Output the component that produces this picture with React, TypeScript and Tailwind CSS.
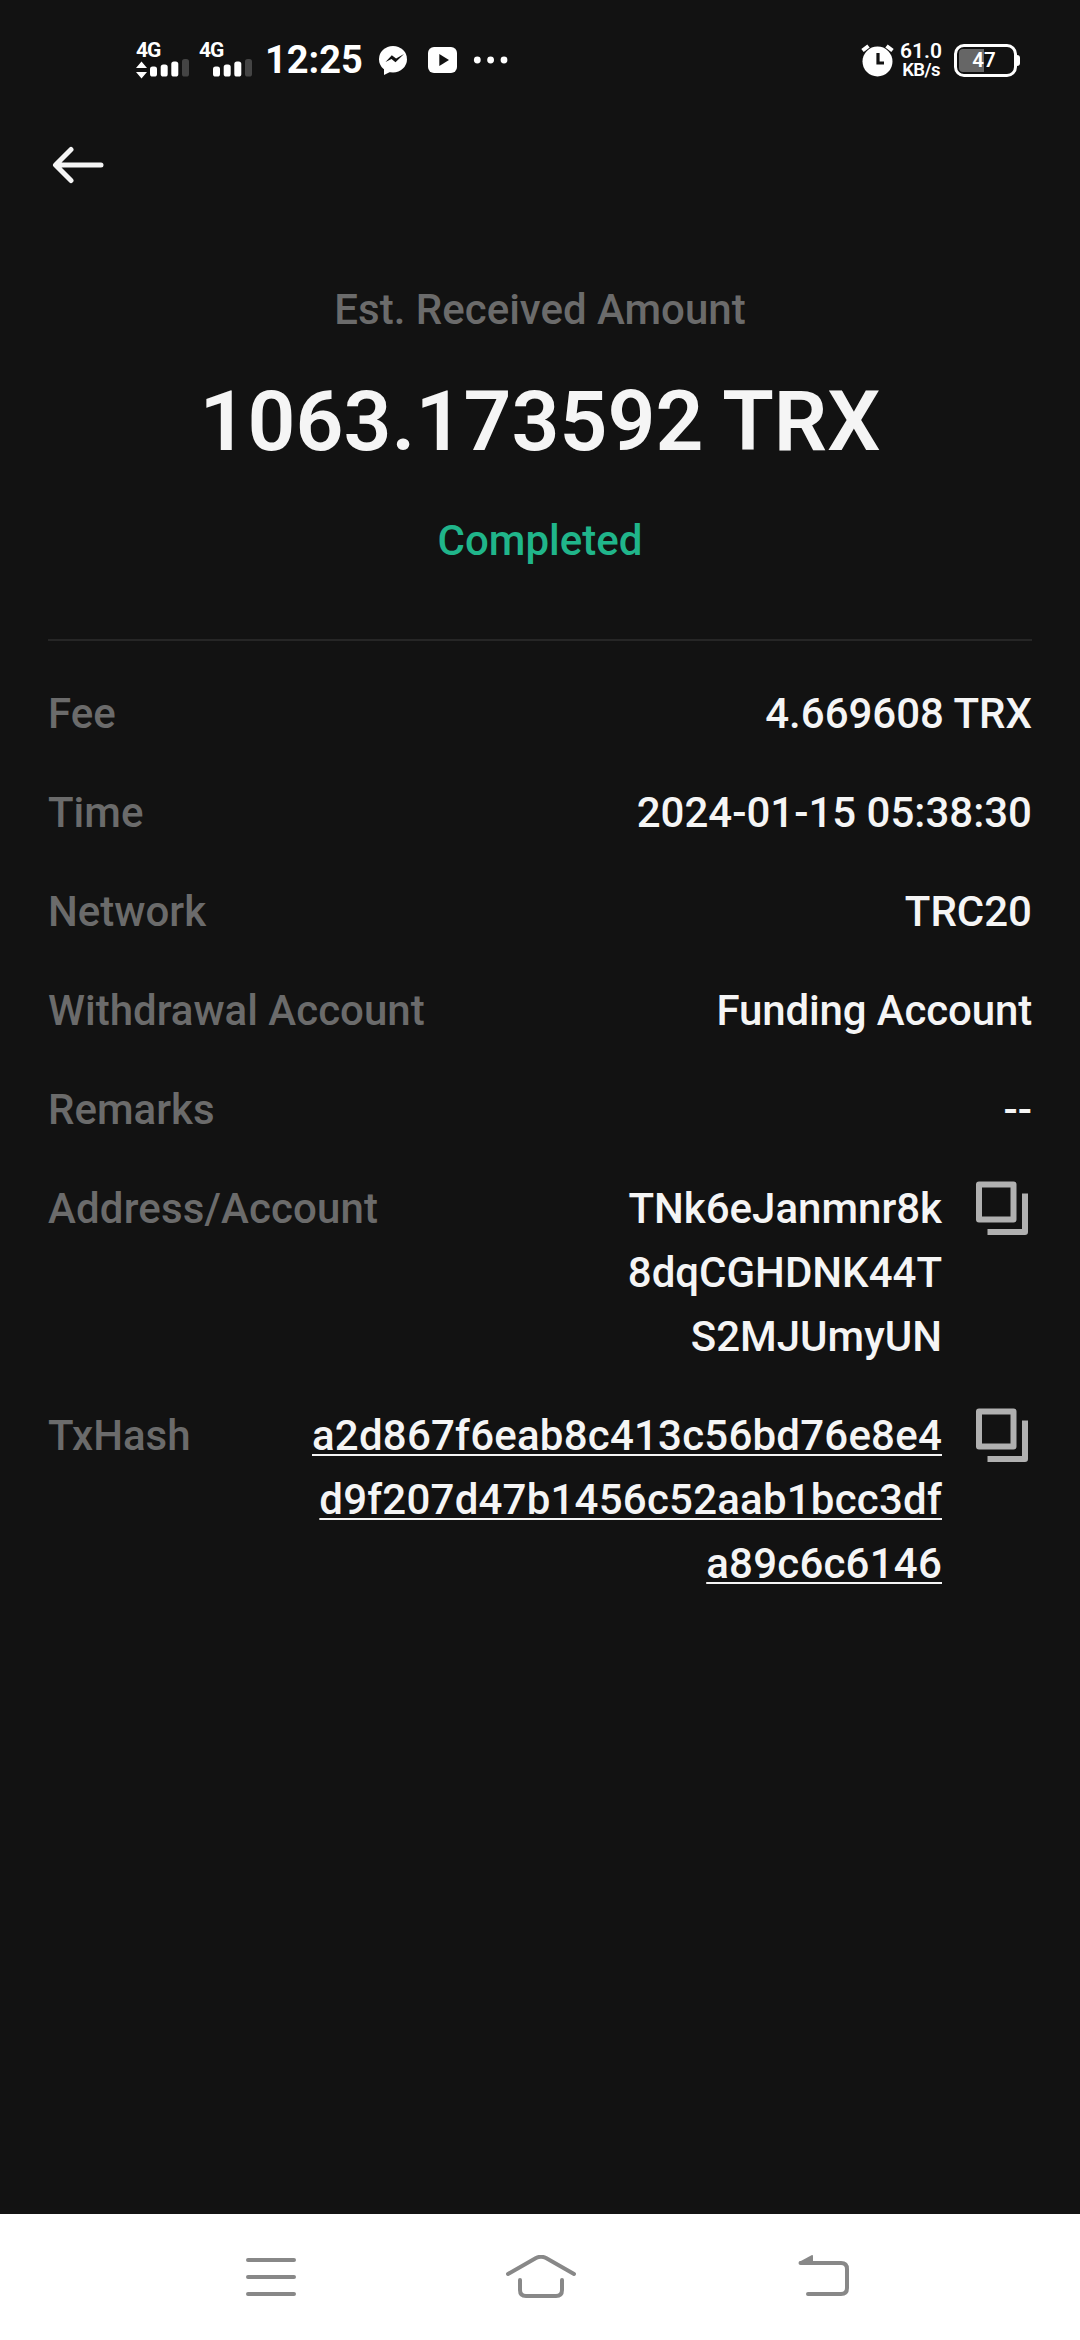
import React from "react";

type Detail = { label: string; value: string; valueClass?: string };

const details: Detail[] = [
  { label: "Fee", value: "4.669608 TRX" },
  { label: "Time", value: "2024-01-15 05:38:30" },
  { label: "Network", value: "TRC20" },
  { label: "Withdrawal Account", value: "Funding Account", valueClass: "tracking-[-0.15px]" },
  { label: "Remarks", value: "--" },
];

const addressLines = ["TNk6eJanmnr8k", "8dqCGHDNK44T", "S2MJUmyUN"];
const hashLines = [
  "a2d867f6eab8c413c56bd76e8e4",
  "d9f207d47b1456c52aab1bcc3df",
  "a89c6c6146",
];

function Signal({ arrows }: { arrows?: boolean }) {
  return (
    <div className="flex w-[54px] flex-col">
      <span className="h-[17px] text-[21px] leading-[17px] font-bold tracking-[-1px]">4G</span>
      <svg className="block h-[20px] w-[54px]" viewBox="0 0 54 20" fill="#fff">
        {arrows && <path d="M5.5 2.5 11 9H0zM5.5 19.5 0 13h11z" />}
        <rect x="14" y="7.5" width="7" height="10" rx="2.6" />
        <rect x="24.7" y="5.5" width="7" height="12" rx="2.6" />
        <rect x="35.3" y="2.5" width="7" height="15" rx="2.6" />
        <rect x="46" y="0" width="7" height="17.5" rx="2.6" fill="#444" />
      </svg>
    </div>
  );
}

function StatusBar() {
  return (
    <header className="flex h-[120px] items-center justify-between pr-[60px] pl-[136px] text-white">
      <div className="flex h-[40px] items-center">
        <Signal arrows />
        <div className="ml-[9px]">
          <Signal />
        </div>
        <span className="ml-[12px] w-[99px] text-[38px] leading-[40px] font-bold">12:25</span>
        <svg className="ml-[15px] block h-[29px] w-[28px]" viewBox="0 0 28 29" fill="#fff">
          <ellipse cx="14" cy="13.2" rx="14" ry="13.2" />
          <path d="M5 20v9l8-4z" />
          <path d="m6.5 16 6.3-6.8 4.3 3.3L25 8l-8.500 8.300-4-3.300z" fill="#121212" />
        </svg>
        <svg className="ml-[21px] block h-[26px] w-[29px]" viewBox="0 0 29 26">
          <rect width="29" height="26" rx="6" fill="#fff" />
          <path d="M11.300 7v12l9.700-6z" fill="#121212" />
        </svg>
        <svg className="ml-[16px] block h-[8px] w-[36px]" viewBox="0 0 36 8" fill="#fff">
          <circle cx="4.3" cy="4" r="3.4" />
          <circle cx="17.6" cy="4" r="3.4" />
          <circle cx="31" cy="4" r="3.4" />
        </svg>
      </div>
      <div className="flex items-center">
        <svg className="block h-[33px] w-[33px]" viewBox="0 0 33 33">
          <circle cx="16.5" cy="17.5" r="15" fill="#fff" />
          <path d="M1.5 6.5 7.5 2M25.5 2l6 4.5" stroke="#fff" strokeWidth="4" />
          <path d="M17 9v10h6" fill="none" stroke="#121212" strokeWidth="3.2" />
        </svg>
        <div className="ml-[6px] flex w-[42px] flex-col items-center">
          <span className="text-[21px] leading-[18px] font-semibold">61.0</span>
          <span className="mt-px text-[18.500px] leading-[18px] font-semibold tracking-[-0.6px]">KB/s</span>
        </div>
        <div className="ml-[12px] flex h-[33px] w-[63px] items-center rounded-[10px] border-[3px] border-white p-[2px]">
          <div className="flex h-full w-full items-center justify-center rounded-[4px] bg-[linear-gradient(90deg,#666_0_25px,transparent_25px)] bg-no-repeat pr-[3px]">
            <span className="text-[20.500px] leading-[23px] font-semibold">47</span>
          </div>
        </div>
        <div className="h-[11px] w-[3px] rounded-r-sm bg-white" />
      </div>
    </header>
  );
}

function CopyIcon() {
  return (
    <svg className="mt-[4px] mr-[3px] ml-[33px] block h-[55px] w-[54px] shrink-0" viewBox="0 0 54 55" fill="none" stroke="#b0b0b0" strokeWidth="6" strokeLinejoin="round">
      <rect x="4" y="3.5" width="34.5" height="35" />
      <path d="M12.5 51H50V12.5" />
    </svg>
  );
}

function LongRow({ label, lines, underline }: { label: string; lines: string[]; underline?: boolean }) {
  return (
    <div className="flex">
      <span className={underline ? "grow text-[#6b6b6b]" : "grow tracking-[0.15px] text-[#6b6b6b]"}>{label}</span>
      <div className="flex flex-col items-end">
        {lines.map((line) => (
          <span
            key={line}
            className={underline ? "tracking-[0.22px] underline decoration-[2px] underline-offset-[4px]" : ""}
          >
            {line}
          </span>
        ))}
      </div>
      <CopyIcon />
    </div>
  );
}

export default function App() {
  return (
    <div className="flex h-[2340px] w-[1080px] flex-col overflow-hidden bg-[#121212] font-['Roboto',sans-serif] text-[42px] leading-[64px] font-medium text-[#f5f5f5]">
      <StatusBar />
      <div className="flex h-[90px] items-center pl-[52px]">
        <svg className="block h-[38px] w-[52px]" viewBox="0 0 52 38" fill="none" stroke="#f5f5f5" strokeWidth="5" strokeLinecap="round" strokeLinejoin="round">
          <path d="M49 19H4M19 3.5 3.5 19 19 34.5" />
        </svg>
      </div>
      <main className="flex grow flex-col px-[48px]">
        <section className="flex h-[429px] flex-col items-center pt-[68px]">
          <span className="text-[#6b6b6b]">Est. Received Amount</span>
          <h1 className="mt-[30px] text-[84px] leading-[100px] font-semibold">1063.173592 TRX</h1>
          <span className="mt-[37px] text-[#20b58a]">Completed</span>
        </section>
        <div className="h-[2px] shrink-0 bg-[#262626]" />
        <section className="mt-[41px] flex flex-col gap-[35px]">
          {details.map((d) => (
            <div key={d.label} className="flex justify-between">
              <span className="text-[#6b6b6b]">{d.label}</span>
              <span className={d.valueClass}>{d.value}</span>
            </div>
          ))}
          <LongRow label="Address/Account" lines={addressLines} />
          <LongRow label="TxHash" lines={hashLines} underline />
        </section>
      </main>
      <nav className="flex h-[126px] shrink-0 items-center bg-white pl-[245px]">
        <svg className="block h-[44px] w-[52px]" viewBox="0 0 52 44" stroke="#888" strokeWidth="4" strokeLinecap="round">
          <path d="M3 5h46M3 22h46M3 39h46" />
        </svg>
        <svg className="ml-[208px] block h-[44px] w-[72px]" viewBox="0 0 72 44" fill="none" stroke="#888" strokeWidth="4" strokeLinecap="round" strokeLinejoin="round">
          <path d="M3 19 31 3q5-2.500 10 0L69 19M15 25v10q0 6 6 6h30q6 0 6-6V25" />
        </svg>
        <svg className="ml-[220px] block h-[44px] w-[54px]" viewBox="0 0 54 44" fill="none" stroke="#888" strokeWidth="4" strokeLinecap="round" strokeLinejoin="round">
          <path d="M3.500 8H44q6 0 6 6v19q0 6-6 6H11" />
          <path d="M2 7 14.500 0.200q1.500-.5 1.500 1V9H3z" fill="#888" stroke="none" />
        </svg>
      </nav>
    </div>
  );
}
